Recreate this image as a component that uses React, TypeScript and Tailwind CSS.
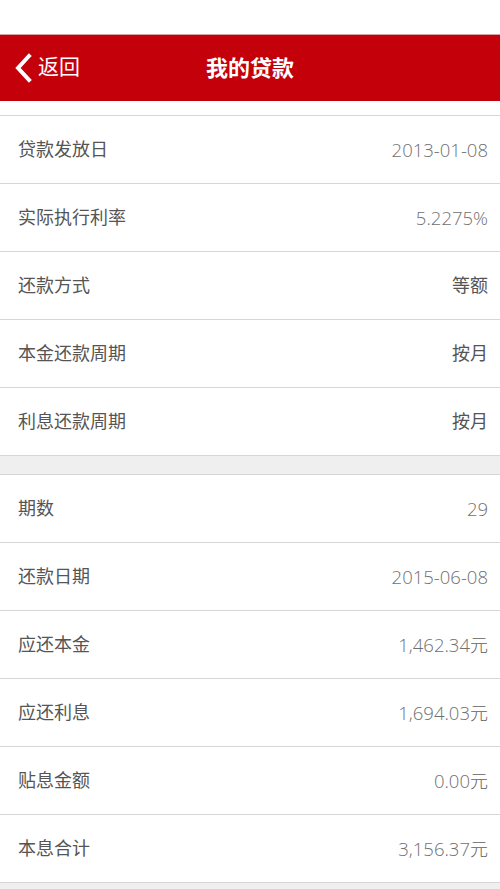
import React from "react";

const group1: [string, string][] = [
  ["贷款发放日", "2013-01-08"],
  ["实际执行利率", "5.2275%"],
  ["还款方式", "等额"],
  ["本金还款周期", "按月"],
  ["利息还款周期", "按月"],
];
const group2: [string, string][] = [
  ["期数", "29"],
  ["还款日期", "2015-06-08"],
  ["应还本金", "1,462.34元"],
  ["应还利息", "1,694.03元"],
  ["贴息金额", "0.00元"],
  ["本息合计", "3,156.37元"],
];

function Value({ value }: { value: string }) {
  const parts = value.split(/([\u4e00-\u9fff]+)/).filter((p) => p !== "");
  return (
    <span className="flex items-baseline">
      {parts.map((p, i) =>
        /[\u4e00-\u9fff]/.test(p) ? (
          <span
            key={i}
            className={
              /\d/.test(value)
                ? "text-[18px] font-light text-[#5f5f5f]"
                : "text-[18px] font-normal text-[#555555]"
            }
          >
            {p}
          </span>
        ) : (
          <span
            key={i}
            className="text-[18.5px] font-light text-[#707070]"
            style={{ fontFamily: '"Open Sans", sans-serif' }}
          >
            {p}
          </span>
        )
      )}
    </span>
  );
}

function Row({ label, value }: { label: string; value: string }) {
  return (
    <div className="flex h-[68px] items-center justify-between border-b border-[#d6d6d6] bg-white pl-[18px] pr-[12px]">
      <span className="text-[18px] text-[#555555]">{label}</span>
      <Value value={value} />
    </div>
  );
}

export default function App() {
  return (
    <div
      className="min-h-[889px] w-[500px] bg-[#efefef]"
      style={{ fontFamily: 'Roboto, "Noto Sans CJK SC", sans-serif' }}
    >
      <div className="h-[34px] bg-white" />
      <div className="relative flex h-[67px] items-center border-t border-[#d9a0a0] bg-[#c4000b]">
        <div className="flex items-center pl-[13px]">
          <svg width="20" height="30" viewBox="0 0 20 30" className="mr-[5px]">
            <path d="M16 3 L5 15 L16 27" fill="none" stroke="white" strokeWidth="4" strokeLinecap="square" />
          </svg>
          <span className="text-[21px] text-white">返回</span>
        </div>
        <div className="absolute inset-x-0 top-0 flex h-full items-center justify-center">
          <span className="text-[22px] font-bold text-white">我的贷款</span>
        </div>
      </div>
      <div className="h-[14px] bg-white" />
      <div className="border-t border-[#d6d6d6]">
        {group1.map(([l, v]) => (
          <Row key={l} label={l} value={v} />
        ))}
      </div>
      <div className="h-[19px] border-b border-[#d6d6d6] bg-[#efefef]" />
      <div>
        {group2.map(([l, v]) => (
          <Row key={l} label={l} value={v} />
        ))}
      </div>
    </div>
  );
}
